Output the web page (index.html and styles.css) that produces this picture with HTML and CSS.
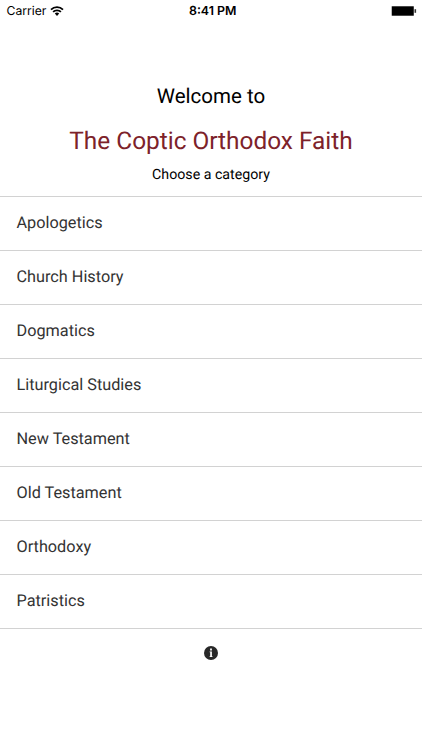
FILE: index.html
```html
<!DOCTYPE html>
<html lang="en">

<head>
    <meta charset="UTF-8">
    <meta name="viewport" content="width=device-width, initial-scale=1.0">
    <title>The Coptic Orthodox Faith</title>
    <link rel="stylesheet" href="styles.css">
</head>

<body>
    <div class="status-bar">
        <div class="carrier">
            <span>Carrier</span>
            <svg class="wifi" viewBox="0 0 14 10">
                <path d="M1 3.7a8.5 8.5 0 0 1 12 0M3.1 5.9a5.5 5.5 0 0 1 7.8 0" fill="none" stroke="#000" stroke-width="1.8"/>
                <path d="M4.8 7.6a3.1 3.1 0 0 1 4.4 0L7 9.9z"/>
            </svg>
        </div>
        <div class="time">8:41 PM</div>
        <div class="power">
            <svg class="battery" viewBox="0 0 26 10">
                <rect x="0.5" y="0" width="22.5" height="10" rx="0.8" fill="#777"/>
                <rect x="1" y="0.6" width="21.5" height="8.8"/>
                <path d="M23.5 3.2h1.6v3.6h-1.6z" fill="#333"/>
            </svg>
        </div>
    </div>

    <div class="header">
        <h2>Welcome to</h2>
        <h1>The Coptic Orthodox Faith</h1>
        <p>Choose a category</p>
    </div>

    <ul class="categories">
        <li>Apologetics</li>
        <li>Church History</li>
        <li>Dogmatics</li>
        <li>Liturgical Studies</li>
        <li>New Testament</li>
        <li>Old Testament</li>
        <li>Orthodoxy</li>
        <li>Patristics</li>
    </ul>

    <div class="footer">
        <svg class="info" viewBox="0 0 14 14">
            <circle cx="7" cy="7" r="7" fill="#282828"/>
            <path d="M5.6 5.5h2.3v4.8h.6v.8H5.6v-.8h.6V6.3h-.6zM6.1 2.6h1.8v1.8H6.1z" fill="#fff"/>
        </svg>
    </div>
</body>

</html>
```
FILE: styles.css
```css
* {
    box-sizing: border-box;
}

body {
    margin: 0;
    background: #fff;
    color: #000;
    font-family: Roboto, sans-serif;
    text-rendering: geometricPrecision;
}

.status-bar {
    display: grid;
    grid-template-columns: 1fr auto 1fr;
    align-items: center;
    height: 22px;
    padding: 0 5px 0 6.5px;
    font-family: Inter, sans-serif;
    font-size: 12.2px;
}

.carrier {
    display: flex;
    align-items: center;
    gap: 4px;
}

.carrier span,
.time {
    padding-bottom: 1px;
}

.wifi {
    width: 14px;
    height: 10px;
}

.time {
    padding-left: 2px;
    font-size: 12.4px;
    font-weight: 600;
}

.power {
    display: flex;
    justify-content: flex-end;
}

.battery {
    width: 26px;
    height: 10px;
}

.header {
    height: 174px;
    padding-top: 61px;
    text-align: center;
}

.header h2 {
    margin: 0;
    font-size: 20.5px;
    font-weight: 400;
    line-height: 28px;
}

.header h1 {
    margin: 13px 0 0;
    color: #7d222a;
    font-size: 24.4px;
    font-weight: 400;
    line-height: 34px;
}

.header p {
    margin: 7px 0 0;
    font-size: 14.2px;
    line-height: 20px;
}

.categories {
    margin: 0;
    padding: 0;
    list-style: none;
    border-top: 1px solid #d2d2d2;
}

.categories li {
    height: 54px;
    padding-left: 16.5px;
    border-bottom: 1px solid #d2d2d2;
    color: #333;
    font-size: 16.25px;
    line-height: 52px;
}

.footer {
    display: flex;
    justify-content: center;
    padding-top: 17px;
}

.info {
    width: 14px;
    height: 14px;
}
```
